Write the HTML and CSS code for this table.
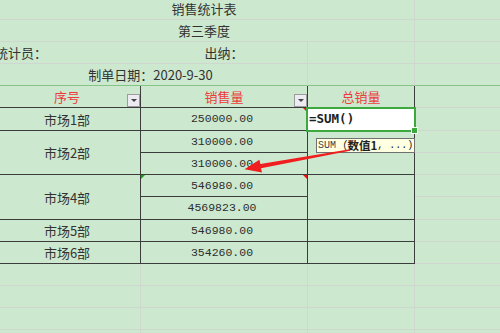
FILE: index.html
```html
<!DOCTYPE html>
<html lang="zh-CN">
<head>
<meta charset="utf-8">
<title>销售统计表</title>
<link rel="stylesheet" href="styles.css">
</head>
<body>
<div class="sheet">
  <!-- 表头信息 -->
  <div class="c s3">销售统计表</div><div class="c"></div>
  <div class="c s3">第三季度</div><div class="c"></div>
  <div class="c left nrb">统计员：</div><div class="c">出纳：</div><div class="c"></div><div class="c"></div>
  <div class="c s2 fz">制单日期：2020-9-30</div><div class="c fz"></div><div class="c fz"></div>

  <!-- 列标题 -->
  <div class="c t hd">序号<span class="dd"></span></div>
  <div class="c t hd">销售量<span class="dd"></span></div>
  <div class="c t hd">总销量</div>
  <div class="c"></div>

  <!-- 数据 -->
  <div class="c t">市场1部</div>
  <div class="c t num">250000.00<span class="mk"></span></div>
  <div class="c t sel">=SUM()<span class="tip"><span class="fn">SUM</span><span class="cj">（<b>数值1</b></span>, ...)</span></div>
  <div class="c"></div>

  <div class="c t r2">市场2部</div>
  <div class="c t num">310000.00</div>
  <div class="c t r2"></div>
  <div class="c"></div>
  <div class="c t num">310000.00</div>
  <div class="c"></div>

  <div class="c t r2">市场4部</div>
  <div class="c t num">546980.00<span class="mk"></span><span class="er"></span></div>
  <div class="c t r2"></div>
  <div class="c"></div>
  <div class="c t num">4569823.00</div>
  <div class="c"></div>

  <div class="c t">市场5部</div>
  <div class="c t num">546980.00</div>
  <div class="c t"></div>
  <div class="c"></div>

  <div class="c t">市场6部</div>
  <div class="c t num">354260.00</div>
  <div class="c t"></div>
  <div class="c"></div>

  <!-- 空白行 -->
  <div class="c"></div><div class="c"></div><div class="c"></div><div class="c"></div>
  <div class="c"></div><div class="c"></div><div class="c"></div><div class="c"></div>
  <div class="c"></div><div class="c"></div><div class="c"></div><div class="c"></div>
  <div class="c"></div><div class="c"></div><div class="c"></div><div class="c"></div>
</div>

<svg class="arrow" width="500" height="333" viewBox="0 0 500 333">
  <polygon points="349.9,149.3 260.4,164.0 259.4,159.8 244.5,169.2 262.0,172.4 261.0,168.3 350.1,150.7" fill="#f01e1e"/>
</svg>
</body>
</html>
```

FILE: styles.css
```css
:root {
  --bg: #cce8cf;
  --grid: #d0d6d0;
  --ink: #3c3c3c;
  --freeze: #86c386;
  --sel: #3da83d;
}

* { box-sizing: border-box; }

html, body { margin: 0; }

body {
  position: relative;
  width: 500px;
  height: 333px;
  overflow: hidden;
  background: var(--bg);
  font-family: "Noto Sans CJK SC", "Noto Sans", sans-serif;
}

.sheet {
  display: grid;
  grid-template-columns: 147px 167px 107px 100px;
  grid-template-rows: 22px 22px 22px 22px 22px 23px 22px 22px 22px 23px 22px 22px 22px 22px 22px 22px;
  margin: -2px 0 0 -6px;
}

.c {
  position: relative;
  display: flex;
  align-items: center;
  justify-content: center;
  border-right: 1px solid var(--grid);
  border-bottom: 1px solid var(--grid);
  font-size: 13px;
  line-height: 1;
  color: #333;
  white-space: nowrap;
}

.s3 { grid-column: span 3; }
.s2 { grid-column: span 2; }
.r2 { grid-row: span 2; }

.left { justify-content: flex-start; padding-left: 1px; }
.nrb { border-right-color: transparent; }

.fz { border-bottom-color: var(--freeze); }

.t {
  border-right-color: var(--ink);
  border-bottom-color: var(--ink);
}

.hd { color: #ee3b3b; }

.num {
  font-family: "Liberation Mono", "DejaVu Sans Mono", monospace;
  font-size: 11.5px;
  color: #2e2e2e;
  padding-right: 4px;
}

/* filter dropdown button */
.dd {
  position: absolute;
  right: 0;
  bottom: 0;
  width: 13px;
  height: 13px;
  background: #ebebf1;
  border: 1px solid #9c9c9c;
}
.dd::after {
  content: "";
  position: absolute;
  left: 3px;
  top: 4px;
  border-left: 3px solid transparent;
  border-right: 3px solid transparent;
  border-top: 3px solid #444;
}

/* comment marker and error marker */
.mk {
  position: absolute;
  top: 0;
  right: 0;
  border-top: 4px solid #f01010;
  border-left: 4px solid transparent;
}
.er {
  position: absolute;
  top: 0;
  left: 0;
  border-top: 4px solid #18a018;
  border-right: 4px solid transparent;
}

/* active cell */
.sel {
  z-index: 2;
  background: #fff;
  justify-content: flex-start;
  padding-left: 1px;
  font-family: "DejaVu Sans Mono", "Liberation Mono", monospace;
  font-weight: bold;
  font-size: 12.5px;
  color: #1e1e1e;
}
.sel::before {
  content: "";
  position: absolute;
  left: -2px;
  top: -1px;
  right: -2px;
  bottom: -2px;
  border: 2px solid var(--sel);
}
.sel::after {
  content: "";
  position: absolute;
  right: -4px;
  bottom: -4px;
  width: 5px;
  height: 5px;
  background: var(--sel);
  border: 1px solid #fff;
}

/* formula hint */
.tip {
  position: absolute;
  left: 8px;
  top: 30px;
  height: 15px;
  padding: 0 1px 0 1px;
  display: flex;
  align-items: center;
  background: #ffffe1;
  border: 1px solid #707070;
  font-family: "Liberation Mono", "DejaVu Sans Mono", monospace;
  font-weight: normal;
  font-size: 10px;
  color: #222;
}
.tip .fn { color: #444; }
.tip .cj {
  font-family: "Noto Sans CJK SC", sans-serif;
  font-size: 11.5px;
}
.tip b { font-weight: bold; }

.arrow {
  position: absolute;
  left: 0;
  top: 0;
  z-index: 3;
  pointer-events: none;
}
```
